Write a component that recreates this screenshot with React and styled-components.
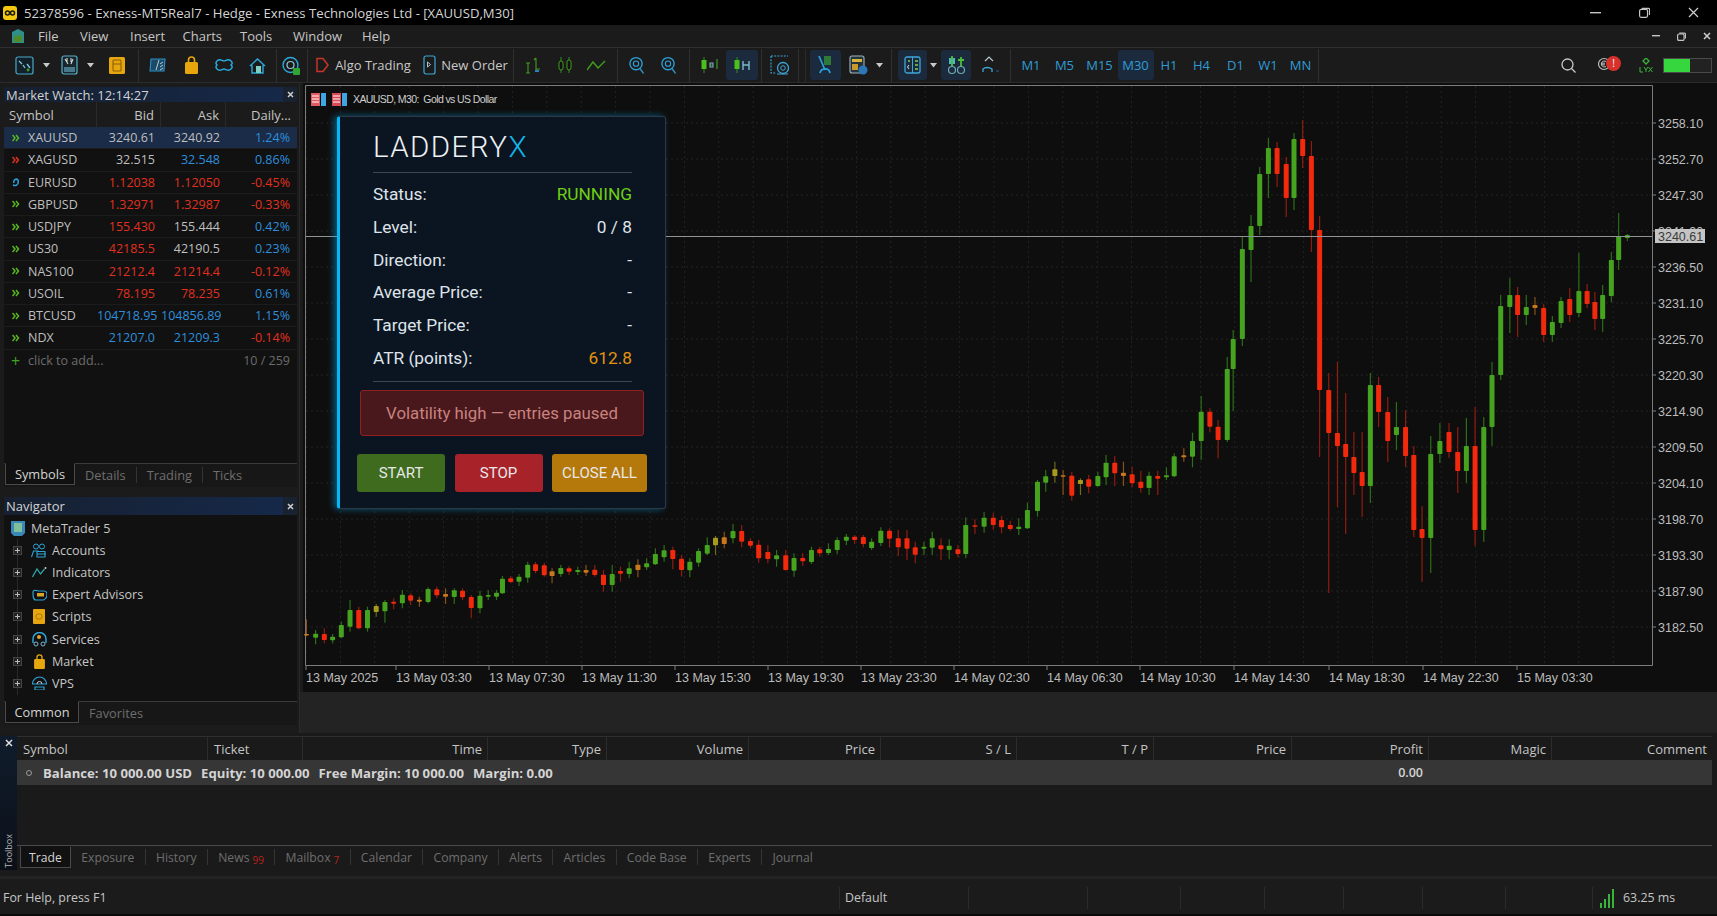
import React from "react"
import styled, { createGlobalStyle } from "styled-components"

const GlobalStyle = createGlobalStyle`
	html, body { margin: 0; padding: 0; background: #000; }
	* { box-sizing: border-box; }
`

const Screen = styled.div`
	width: 1717px;
	height: 916px;
	display: flex;
	flex-direction: column;
	overflow: hidden;
	background: #1b1b1b;
	font-family: "Open Sans", "Liberation Sans", sans-serif;
	font-size: 12.5px;
	color: #c8c8c8;
`

/* title bar + menu */
const TitleBar = styled.div`
	height: 25px;
	flex: none;
	background: #000;
	display: flex;
	align-items: center;
	padding-left: 3px;
	color: #d4d4d4;
	font-size: 13.15px;
`
const TitleText = styled.span`
	margin-left: 7px;
	white-space: nowrap;
`
const WindowButtons = styled.div`
	margin-left: auto;
	display: flex;
	align-items: center;
	gap: ${(p) => p.$gap}px;
	padding-right: ${(p) => p.$right}px;
`
const MenuBar = styled.div`
	height: 23px;
	flex: none;
	display: flex;
	align-items: center;
	padding-left: 11px;
	background: #1b1b1b;
	border-bottom: 1px solid #303030;
	font-size: 13px;
	color: #c6c6c6;
`
const MenuItem = styled.span`
	width: ${(p) => p.$w}px;
	margin-left: ${(p) => p.$ml || 0}px;
`

/* toolbar */
const Toolbar = styled.div`
	height: 35px;
	flex: none;
	display: flex;
	align-items: center;
	background: #1b1b1b;
	border-bottom: 1px solid #2c2c2c;
	font-size: 13px;
	color: #c8c8c8;
`
const Tool = styled.div`
	width: ${(p) => p.$w}px;
	margin-left: ${(p) => p.$ml || 0}px;
	flex: none;
	height: 30px;
	display: flex;
	align-items: center;
	justify-content: center;
	border-radius: 3px;
	background: ${(p) => (p.$on ? "#1b2b3d" : "transparent")};
	white-space: nowrap;
`
const ToolSep = styled.div`
	width: 1px;
	height: 33px;
	flex: none;
	margin-left: ${(p) => p.$ml}px;
	background: ${(p) => (p.$dotted ? "#2a2a2a" : "#303030")};
`
const Timeframe = styled(Tool)`
	color: #2f9bd6;
	font-size: 13px;
`
const ToolbarEnd = styled.div`
	margin-left: auto;
	display: flex;
	align-items: center;
	padding-right: 5px;
`
const AlertDot = styled.div`
	position: absolute;
	left: 9px;
	top: 0;
	width: 15px;
	height: 15px;
	border-radius: 50%;
	background: #d8302a;
	color: #fff;
	font-size: 10px;
	line-height: 15px;
	text-align: center;
`
const CoinWrap = styled.div`
	position: relative;
	width: 24px;
	height: 15px;
	margin-left: 21px;
	margin-top: -3px;
`
const Meter = styled.div`
	width: 49px;
	height: 15px;
	margin-left: 10px;
	border: 1px solid #4a4a4a;
	background: #222;
`
const MeterFill = styled.div`
	height: 100%;
	background: #36d63f;
`

/* workspace */
const Workspace = styled.div`
	height: 650px;
	flex: none;
	display: flex;
`
const LeftDock = styled.div`
	width: 300px;
	flex: none;
	display: flex;
	flex-direction: column;
	padding: 4px 2px 6px 4px;
	border-right: 1px solid #2a2a2a;
`
const DockPanel = styled.div`
	background: #111;
	display: flex;
	flex-direction: column;
	height: ${(p) => p.$h}px;
	margin-top: ${(p) => p.$mt || 0}px;
`
const DockTitle = styled.div`
	height: ${(p) => p.$h}px;
	flex: none;
	display: flex;
	align-items: center;
	justify-content: space-between;
	padding: 0 0 0 2px;
	background: linear-gradient(90deg, #162030, #16294a);
	color: #d2d2d2;
	font-size: 13px;
`
const DockClose = styled.span`
	width: 14px;
	height: 100%;
	display: flex;
	align-items: center;
	justify-content: center;
	background: #192230;
`
const QuotesHead = styled.div`
	height: 25px;
	flex: none;
	display: grid;
	grid-template-columns: 93px 64px 65px 1fr;
	background: #1b1b1b;
	color: #c4c4c4;
	font-size: 13px;
`
const HeadCell = styled.div`
	display: flex;
	align-items: center;
	justify-content: ${(p) => (p.$left ? "flex-start" : "flex-end")};
	padding: ${(p) => (p.$left ? "0 0 0 5px" : "0 6px 0 0")};
	border-right: 1px solid #2a2a2a;
	&:last-child { border-right: none; }
`
const QuoteRow = styled.div`
	height: 22.25px;
	flex: none;
	display: grid;
	grid-template-columns: 93px 64px 65px 1fr;
	align-items: center;
	background: ${(p) => (p.$active ? "#1a2c47" : "transparent")};
	border-bottom: 1px solid #1c1c1c;
	font-size: 12.5px;
`
const SymbolCell = styled.div`
	display: flex;
	align-items: center;
	gap: 8px;
	padding-left: 8px;
	color: #bfbfbf;
`
const QuoteCell = styled.div`
	text-align: right;
	padding-right: ${(p) => p.$pad}px;
	white-space: nowrap;
	color: ${(p) => ({ red: "#e2301f", blue: "#2e8fdc", gray: "#bfbfbf" })[p.$tone]};
`
const AddRow = styled.div`
	display: flex;
	align-items: center;
	height: 22px;
	padding: 0 7px 0 7px;
	color: #6c6c6c;
`
const AddPlus = styled.span`
	color: #3fa423;
	font-size: 16px;
	line-height: 16px;
	width: 17px;
`
const AddCount = styled.span`
	margin-left: auto;
`
const TabStrip = styled.div`
	height: ${(p) => p.$h}px;
	flex: none;
	display: flex;
	align-items: flex-start;
	border-top: 1px solid #3a3a3a;
	background: #171717;
	color: #6e6e6e;
	font-size: 12.8px;
`
const ActiveTab = styled.div`
	height: calc(100% - 1px);
	width: ${(p) => p.$w}px;
	margin-left: 1px;
	flex: none;
	margin-top: -1px;
	display: flex;
	align-items: center;
	justify-content: center;
	background: #111;
	color: #d4d4d4;
	border: 1px solid #4a4a4a;
	border-top: 1px solid #111;
`
const Tab = styled.div`
	height: 70%;
	margin-top: 3px;
	padding: 0 10px;
	display: flex;
	align-items: center;
	white-space: nowrap;
	border-right: 1px solid ${(p) => (p.$last ? "transparent" : "#343434")};
`
const TabBadge = styled.sup`
	color: #b8241c;
	font-size: 10px;
	vertical-align: baseline;
	margin: 6px 0 0 3px;
`
const Spacer = styled.div`
	flex: 1;
`
const TreeList = styled.div`
	padding-top: 2px;
`
const TreeRow = styled.div`
	height: 22.2px;
	flex: none;
	position: relative;
	display: flex;
	align-items: center;
	padding-left: ${(p) => (p.$root ? 6 : 9)}px;
	color: #c6c6c6;
	font-size: 12.6px;
	&::before {
		content: ${(p) => (p.$root ? "none" : '""')};
		position: absolute;
		left: 13px;
		top: 0;
		bottom: 0;
		width: 1px;
		background: #2a2a2a;
	}
`
const TreeToggle = styled.span`
	width: 9px;
	height: 9px;
	flex: none;
	margin-right: 9px;
	position: relative;
	border: 1px solid #444;
	background: #222;
	&::before {
		content: "";
		position: absolute;
		left: 1px;
		right: 1px;
		top: 3px;
		height: 1px;
		background: #bbb;
	}
	&::after {
		content: "";
		position: absolute;
		top: 1px;
		bottom: 1px;
		left: 3px;
		width: 1px;
		background: #bbb;
	}
`
const TreeIcon = styled.span`
	width: 16px;
	height: 16px;
	flex: none;
	margin-right: 5px;
	display: flex;
	align-items: center;
	justify-content: center;
`

/* chart */
const ChartColumn = styled.div`
	flex: 1;
	display: flex;
	flex-direction: column;
	padding-left: 3px;
	min-width: 0;
`
const ChartFrame = styled.div`
	position: relative;
	height: 609px;
	flex: none;
	background: #0e0e0e;
`
const ChartBand = styled.div`
	flex: 1;
	background: #232323;
	margin-left: -3px;
`
const ChartCaption = styled.div`
	position: absolute;
	left: 8px;
	top: 8px;
	display: flex;
	align-items: center;
	height: 16px;
	font-family: "Liberation Sans", sans-serif;
	font-size: 10.5px;
	letter-spacing: -0.6px;
	color: #cfcfcf;
	white-space: pre;
`
const FlagSlot = styled.span`
	margin-left: 6px;
`
const CaptionText = styled.span`
	margin-left: 6px;
`

/* ladderyx panel */
const RobotPanel = styled.div`
	position: absolute;
	left: 34px;
	top: 33px;
	width: 329px;
	height: 393px;
	padding: 12px 33px 0 33px;
	border: 1px solid #2e3947;
	border-left: 3px solid #05b7f5;
	border-radius: 3px;
	background: #0b1522;
	box-shadow: -3px 0 7px rgba(5, 170, 240, 0.5);
	font-family: Roboto, "Liberation Sans", sans-serif;
	color: #dfe4ea;
`
const RobotTitle = styled.div`
	height: 36px;
	line-height: 36px;
	font-size: 29.5px;
	font-weight: 300;
	letter-spacing: 1.4px;
	color: #eef1f4;
`
const RobotAccent = styled.span`
	color: #12b6ea;
`
const RobotRule = styled.div`
	height: 1px;
	background: #3c4652;
	margin-top: ${(p) => p.$mt}px;
`
const RobotRows = styled.div`
	margin-top: 5px;
`
const RobotRow = styled.div`
	height: 32.7px;
	display: flex;
	align-items: center;
	justify-content: space-between;
	font-size: 17.3px;
`
const RobotValue = styled.span`
	color: ${(p) => p.$color || "#dfe4ea"};
`
const RobotAlert = styled.div`
	height: 46px;
	margin: 8px -12px 0 -13px;
	display: flex;
	align-items: center;
	justify-content: center;
	border: 1px solid #8f2020;
	border-radius: 3px;
	background: #48181c;
	color: #c9827e;
	font-size: 16.8px;
`
const RobotActions = styled.div`
	display: flex;
	gap: 9.5px;
	margin: 18px -15px 0 -16px;
`
const RobotButton = styled.button`
	width: ${(p) => p.$w}px;
	height: 38px;
	padding: 0;
	border: none;
	border-radius: 3px;
	background: ${(p) => p.$bg};
	color: #e8e8e8;
	font-family: inherit;
	font-size: 15px;
`

/* toolbox */
const Toolbox = styled.div`
	height: 143px;
	flex: none;
	display: flex;
	padding-top: 3px;
	background: #1a1a1a;
`
const ToolboxRail = styled.div`
	width: 17px;
	flex: none;
	display: flex;
	flex-direction: column;
	align-items: center;
	justify-content: space-between;
	margin-bottom: 6px;
	padding: 3px 0 2px;
	background: linear-gradient(180deg, #101c2c, #0b1018);
`
const RailLabel = styled.span`
	writing-mode: vertical-rl;
	transform: rotate(180deg);
	font-size: 9px;
	line-height: 12px;
	color: #b8b8b8;
`
const ToolboxBody = styled.div`
	flex: 1;
	min-width: 0;
	display: flex;
	flex-direction: column;
	padding-right: 5px;
`
const TradeHead = styled.div`
	height: 24px;
	flex: none;
	display: flex;
	border-top: 1px solid #2e2e2e;
	color: #c4c4c4;
	font-size: 13px;
`
const TradeColumn = styled.div`
	width: ${(p) => p.$w}px;
	flex: none;
	display: flex;
	align-items: center;
	justify-content: ${(p) => (p.$left ? "flex-start" : "flex-end")};
	padding: 0 5px 0 6px;
	border-right: 1px solid #2c2c2c;
	&:last-child { border-right: none; }
`
const BalanceRow = styled.div`
	height: 25px;
	flex: none;
	display: flex;
	align-items: center;
	padding-left: 9px;
	background: #363636;
	color: #d4d4d4;
	font-weight: 700;
	font-size: 13.15px;
`
const BalanceMark = styled.span`
	width: 6px;
	height: 6px;
	margin-right: 11px;
	border: 1px solid #9a9a9a;
	border-radius: 50%;
`
const BalanceText = styled.span`
	white-space: nowrap;
	margin-right: ${(p) => p.$mr}px;
`
const BalanceProfit = styled.span`
	margin-left: auto;
	margin-right: 289px;
	font-weight: 600;
	font-size: 12.5px;
`
const TradeEmpty = styled.div`
	height: 61px;
	flex: none;
	background: #1a1a1a;
	border-bottom: 1px solid #4a4a4a;
`
const ToolboxTabs = styled.div`
	height: 24px;
	flex: none;
	display: flex;
	align-items: flex-start;
	padding-left: 2px;
	color: #6e6e6e;
	font-size: 12.2px;
`
const ToolboxActive = styled(ActiveTab)`
	height: 22px;
	margin-top: 0;
`
const ToolboxTab = styled(Tab)`
	height: 16px;
	margin-top: 3px;
	padding: 0 10.3px;
`
const StatusBar = styled.div`
	height: 40px;
	flex: none;
	display: flex;
	align-items: center;
	padding-top: 2px;
	border-top: 3px solid #232323;
	border-bottom: 2px solid #0a0a0a;
	background: #1b1b1b;
	color: #c6c6c6;
	font-size: 12.4px;
`
const StatusCell = styled.div`
	width: ${(p) => p.$w}px;
	height: 22px;
	flex: none;
	display: flex;
	align-items: center;
	gap: 8px;
	padding-left: ${(p) => p.$pad || 0}px;
	border-right: 1px solid #2b2b2b;
	&:last-child { border-right: none; }
`

/* icons */
const Svg = ({ w, h, children }) => (
	<svg width={w} height={h} viewBox={`0 0 ${w} ${h}`} fill="none" style={{ display: "block" }}>
		{children}
	</svg>
)
const Caret = () => (
	<Svg w={7} h={5}>
		<path d="M0 0h7L3.5 4.5z" fill="#c8c8c8" />
	</Svg>
)
const CloseX = ({ size = 8, color = "#cfcfcf", stroke = 1.5 }) => (
	<Svg w={size} h={size}>
		<path d={`M1 1L${size - 1} ${size - 1}M${size - 1} 1L1 ${size - 1}`} stroke={color} strokeWidth={stroke} />
	</Svg>
)
const MinimizeGlyph = ({ w }) => (
	<Svg w={w} h={2}>
		<rect width={w} height={1.4} fill="#c4c4c4" />
	</Svg>
)
const RestoreGlyph = ({ s }) => (
	<Svg w={s} h={s}>
		<rect x="0.6" y={s * 0.22} width={s * 0.72} height={s * 0.72} rx="1.5" stroke="#c4c4c4" strokeWidth="1.2" />
		<path d={`M${s * 0.25} ${s * 0.12}H${s - 1.5}a1 1 0 0 1 1 1V${s * 0.72}`} stroke="#c4c4c4" strokeWidth="1.2" />
	</Svg>
)
const ExnessLogo = () => (
	<Svg w={14} h={14}>
		<rect width="14" height="14" rx="3" fill="#f3c80e" />
		<circle cx="4.5" cy="7" r="2" stroke="#1a1a1a" strokeWidth="1.5" />
		<circle cx="9.5" cy="7" r="2" stroke="#1a1a1a" strokeWidth="1.5" />
	</Svg>
)
const TerminalLogo = () => (
	<Svg w={14} h={15}>
		<path d="M1 3l6-3 6 3v11H1z" fill="#2f8f8a" />
		<path d="M3 13V8l2-2 2 2 2-3 2 3v5z" fill="#4f8a2c" />
	</Svg>
)
const ChartNewIcon = () => (
	<Svg w={19} h={19}>
		<rect x="1" y="1" width="17" height="17" rx="2" stroke="#4aa7c9" strokeWidth="1.2" fill="#122029" />
		<path d="M4 5l3 3M8 9l2 3M12 8l3 4" stroke="#7fc6dd" strokeWidth="1.3" />
		<circle cx="13" cy="14" r="1.4" fill="#3f9d1e" />
	</Svg>
)
const ProfileIcon = () => (
	<Svg w={17} h={20}>
		<rect x="1" y="1" width="15" height="18" rx="2" stroke="#58b0c8" strokeWidth="1.2" fill="#18272d" />
		<path d="M4 4l3 5M12 4l-2 5M6 3v4M10 3v4" stroke="#d8d8d8" strokeWidth="1.1" />
		<rect x="3" y="12" width="11" height="5" fill="#49788a" />
	</Svg>
)
const SheetIcon = () => (
	<Svg w={16} h={17}>
		<rect width="16" height="17" rx="1.5" fill="#e8a60e" />
		<rect x="4" y="3" width="8" height="11" rx="1" stroke="#8a6008" strokeWidth="1.1" />
		<path d="M4 7h8" stroke="#8a6008" />
	</Svg>
)
const WalletIcon = () => (
	<Svg w={17} h={14}>
		<path d="M2 1h14l-1 12H1z" fill="#1c4a66" stroke="#2f8fc4" strokeWidth="1.1" />
		<path d="M7 12L10 2M11 6l3-2M11 9l3-2M11 12l3-2" stroke="#b4ced9" strokeWidth="1" />
	</Svg>
)
const LockIcon = ({ w = 13, h = 18 }) => (
	<svg width={w} height={h} viewBox="0 0 13 18" fill="none" style={{ display: "block" }}>
		<path d="M3.5 6V4a3 3 0 0 1 6 0v2" stroke="#e8a60e" strokeWidth="1.6" />
		<rect y="6" width="13" height="12" rx="1.5" fill="#e8a60e" />
	</svg>
)
const SignalsIcon = () => (
	<Svg w={18} h={14}>
		<path d="M2 3c3-3 5 0 7 0s4-3 7 0c2 2 1 3 0 4 1 1 2 2 0 4-3 3-5 0-7 0s-4 3-7 0c-2-2-1-3 0-4-1-1-2-2 0-4z" stroke="#29a9dc" strokeWidth="1.5" />
	</Svg>
)
const HostingIcon = () => (
	<Svg w={17} h={17}>
		<path d="M1 9l7.5-7L16 9M3 8v8h11V8" stroke="#29a9dc" strokeWidth="1.4" />
		<rect x="7" y="9" width="5" height="7" fill="#7fd0c4" />
	</Svg>
)
const MqlIcon = () => (
	<Svg w={18} h={19}>
		<circle cx="8.5" cy="9" r="7.5" stroke="#29a9dc" strokeWidth="1.4" />
		<circle cx="8.5" cy="9" r="3.5" stroke="#8fc7dc" strokeWidth="1.2" />
		<rect x="11" y="12" width="7" height="7" rx="1" fill="#2fa532" />
	</Svg>
)
const AlgoIcon = () => (
	<Svg w={13} h={16}>
		<path d="M1 1.5h6l5 6.5-5 6.5H1z" stroke="#c8352a" strokeWidth="1.5" />
	</Svg>
)
const OrderIcon = () => (
	<Svg w={13} h={20}>
		<rect x="1" y="1" width="11" height="18" rx="2" stroke="#3ea6d8" strokeWidth="1.2" />
		<path d="M4.5 7l3 2.5-3 2.5z" stroke="#a5c7d8" />
	</Svg>
)
const BarsChartIcon = () => (
	<Svg w={15} h={18}>
		<path d="M2 7v10M0 17h4M0 7h4" stroke="#3f9d1e" strokeWidth="1.1" />
		<path d="M10 2v12M8 4l2-2M10 13h4" stroke="#3f9d1e" strokeWidth="1.1" />
		<path d="M9 15h4" stroke="#2f7fc4" strokeWidth="2" />
	</Svg>
)
const CandlesIcon = () => (
	<Svg w={16} h={18}>
		<path d="M4 1v16M12 1v16" stroke="#2f8f22" strokeWidth="1" />
		<rect x="2" y="5" width="4" height="9" rx="2" stroke="#3f9d1e" fill="#111" />
		<rect x="10" y="4" width="4" height="10" rx="2" stroke="#3f9d1e" fill="#111" />
	</Svg>
)
const LineIcon = () => (
	<Svg w={21} h={14}>
		<path d="M0 12l6-8 5 6 7-7" stroke="#3f9d1e" strokeWidth="1.4" />
	</Svg>
)
const ZoomIcon = () => (
	<Svg w={16} h={19}>
		<circle cx="7.5" cy="7.5" r="6.5" stroke="#2ea0d8" strokeWidth="1.4" />
		<circle cx="7.5" cy="7.5" r="2.8" stroke="#2ea0d8" strokeWidth="1.2" />
		<path d="M12 13l3.5 5" stroke="#2ea0d8" strokeWidth="1.4" />
	</Svg>
)
const GreenBarsIcon = ({ hi }) => (
	<Svg w={18} h={18}>
		<path d="M4 1v16" stroke="#2e8f1f" />
		<rect x="1.5" y="4" width="5" height="9" fill="#4cbf1f" />
		{hi ? (
			<path d="M10 5v9M16 5v9M10 9h6" stroke="#7fb8cc" strokeWidth="1.4" />
		) : (
			<>
				<path d="M10 9h3M17 3v10" stroke="#3f9d1e" strokeWidth="1.2" />
				<rect x="10" y="7" width="3" height="4" stroke="#7fb8cc" />
			</>
		)}
	</Svg>
)
const AutoscaleIcon = () => (
	<Svg w={19} h={20}>
		<path d="M1 1h17M1 1v17h5" stroke="#3ea6d8" strokeWidth="1.1" strokeDasharray="2 1.2" />
		<circle cx="13" cy="13" r="5.5" stroke="#3ea6d8" strokeWidth="1.3" />
		<circle cx="13" cy="13" r="2.3" stroke="#3ea6d8" />
		<path d="M7 19h11" stroke="#3ea6d8" />
	</Svg>
)
const CursorIcon = () => (
	<Svg w={16} h={20}>
		<rect x="7" y="1" width="7" height="9" fill="#2f7a3a" />
		<path d="M2 1l6 14M3 18c1-5 9-6 10 0" stroke="#29a0d8" strokeWidth="1.7" />
	</Svg>
)
const CalcIcon = () => (
	<Svg w={19} h={20}>
		<rect x="1" y="1" width="14" height="17" rx="2" stroke="#9fb3bb" strokeWidth="1.1" fill="#24343a" />
		<rect x="3" y="4" width="10" height="3" fill="#d8b23a" />
		<rect x="3" y="9" width="6" height="6" fill="#c99a2a" />
		<circle cx="14" cy="15" r="4.5" fill="#2a78b8" />
	</Svg>
)
const GridIcon = () => (
	<Svg w={17} h={18}>
		<rect x="1" y="1" width="15" height="16" rx="2" stroke="#3ea6d8" strokeWidth="1.3" />
		<path d="M8.5 1v16" stroke="#3ea6d8" />
		<path d="M4 5h2M11 5h3M11 9h3M11 13h3" stroke="#7fd04a" strokeWidth="1.3" />
		<path d="M5 9L3.5 11 5 13" stroke="#cfe3ea" />
	</Svg>
)
const GearIcon = () => (
	<Svg w={20} h={20}>
		<rect x="3" y="3" width="6" height="6" fill="#4cb8c4" />
		<path d="M6 1v10M15 2v10M12 5h6" stroke="#4cbf3a" strokeWidth="1.8" />
		<circle cx="6" cy="15" r="3.5" stroke="#6fa8b4" strokeWidth="1.2" />
		<circle cx="15" cy="15" r="3.5" stroke="#6fa8b4" strokeWidth="1.2" />
	</Svg>
)
const ArrowsIcon = () => (
	<Svg w={19} h={18}>
		<path d="M4 5l4-4 4 4" stroke="#b5c9cf" strokeWidth="1.2" />
		<path d="M2 16v-3c2-2 6-2 9 0v3" stroke="#3ea6d8" strokeWidth="1.3" />
		<path d="M15 15h3" stroke="#244f66" strokeWidth="1.4" />
	</Svg>
)
const SearchIcon = () => (
	<Svg w={15} h={15}>
		<circle cx="6.5" cy="6.5" r="5.5" stroke="#c8c8c8" strokeWidth="1.3" />
		<path d="M10.5 10.5l4 4" stroke="#c8c8c8" strokeWidth="1.3" />
	</Svg>
)
const CoinIcon = () => (
	<Svg w={13} h={15}>
		<circle cx="7" cy="8" r="5.5" stroke="#bdbdbd" strokeWidth="1.2" />
		<path d="M9 5.5a3 3 0 1 0 0 5M4 7.2h4M4 8.8h4" stroke="#bdbdbd" />
	</Svg>
)
const LyxIcon = () => (
	<Svg w={14} h={15}>
		<path d="M7 0l3 3-3 3-3-3z" stroke="#38b43a" strokeWidth="1.3" />
		<path d="M1 9v5h3M5 9l2 3 2-3M7 12v2M9.5 9l4 5M13.5 9l-4 5" stroke="#38b43a" strokeWidth="1" />
	</Svg>
)
const ChevronMark = ({ color }) => (
	<Svg w={8} h={8}>
		<path d="M0.5 1l2.5 3-2.5 3M4 1l2.5 3L4 7" stroke={color} strokeWidth="1.5" />
	</Svg>
)
const SpreadMark = () => (
	<Svg w={8} h={9}>
		<path d="M1 7c4 2 6-2 5-5-2-2-5 0-4 3" stroke="#2ba3db" strokeWidth="1.5" />
	</Svg>
)
const AccountsIcon = () => (
	<Svg w={16} h={15}>
		<circle cx="5" cy="3.5" r="2.5" stroke="#2fa3d6" />
		<circle cx="11" cy="3.5" r="2.5" stroke="#2fa3d6" />
		<path d="M0.5 14l2-6h5M6 14V8.5h8V14zM6 11h9" stroke="#2fa3d6" strokeWidth="1.1" />
	</Svg>
)
const IndicatorsIcon = () => (
	<Svg w={15} h={12}>
		<path d="M0.5 11L5 3l3.5 5 4-5" stroke="#2da4a8" strokeWidth="1.3" />
		<circle cx="13.5" cy="2" r="1" fill="#cfcfcf" />
	</Svg>
)
const AdvisorsIcon = () => (
	<Svg w={15} h={12}>
		<path d="M1 3c0-3 5-1 6-1h5c2 0 3 2 3 4s-2 5-4 5H4C1 11 1 7 1 3z" stroke="#2fa3d6" strokeWidth="1.2" />
		<rect x="5" y="4" width="7" height="3.5" fill="#d8a52a" />
	</Svg>
)
const ScriptsIcon = () => (
	<Svg w={12} h={15}>
		<rect width="12" height="15" rx="1" fill="#e8a60e" />
		<rect x="3" y="5" width="6" height="5" rx="2" stroke="#a8760a" />
	</Svg>
)
const ServicesIcon = () => (
	<Svg w={15} h={15}>
		<path d="M1 11V7a6.5 6.5 0 0 1 13 0v4" stroke="#2fa3d6" strokeWidth="1.5" />
		<circle cx="7" cy="5" r="2" fill="#e0a42a" />
		<circle cx="4" cy="12" r="2" stroke="#7fb7cf" />
		<circle cx="11" cy="12" r="2" stroke="#7fb7cf" />
	</Svg>
)
const VpsIcon = () => (
	<Svg w={15} h={14}>
		<path d="M0.5 8a7 7 0 0 1 14 0zM3 11h9v3H3z" stroke="#2fa3d6" strokeWidth="1.2" />
		<path d="M5 8a2.5 2.5 0 0 1 5 0" stroke="#cfcfcf" />
	</Svg>
)
const RootIcon = () => (
	<Svg w={14} h={15}>
		<path d="M0 0h14v12l-3 3H3l-3-3z" fill="#3a88b8" />
		<rect x="3" y="2" width="8" height="9" fill="#7fbf9a" />
	</Svg>
)
const SignalBars = () => (
	<Svg w={15} h={20}>
		<rect x="0" y="15" width="2" height="5" fill="#38b43a" />
		<rect x="4" y="11" width="2" height="9" fill="#38b43a" />
		<rect x="8" y="6" width="2" height="14" fill="#38b43a" />
		<rect x="12" y="1" width="2" height="19" fill="#38b43a" />
	</Svg>
)
const FlagIcon = ({ tint }) => (
	<Svg w={15} h={13}>
		<rect width="9" height="13" fill={tint} />
		<path d="M1 3h7M1 6h7M1 9h7" stroke="#fff" strokeWidth="1" />
		<rect x="10" y="0" width="5" height="13" fill="#3ea6e0" />
	</Svg>
)

/* chart data: samples as [x, bodyTop, bodyBottom, high, low, color] */
const sessionA = [
	[14,612,615,568,618,"o"],[34,611,623,600,643,"g"],[53,612,630,595,640,"r"],[71,620,631,612,640,"g"],[90,585,622,575,625,"g"],
	[109,540,590,510,605,"g"],[128,540,595,530,598,"r"],[147,540,595,530,605,"g"],[166,528,546,522,560,"y"],[185,516,544,510,578,"g"],
	[204,515,521,505,538,"r"],[223,494,520,480,535,"g"],[241,496,512,490,525,"r"],[260,509,515,500,530,"o"],[279,477,516,472,520,"g"],
	[298,478,496,470,505,"r"],[317,492,500,475,522,"o"],[336,481,501,475,522,"g"],[354,482,502,475,510,"r"],[373,501,534,495,565,"r"],
	[392,497,535,482,550,"g"],[410,495,500,480,510,"g"],[428,488,500,480,510,"g"],[441,446,490,438,492,"g"],[459,445,456,438,460,"r"],
	[477,440,455,432,468,"g"],[496,404,443,395,458,"g"],[513,403,423,396,430,"r"],[532,406,436,398,440,"r"],[549,424,438,415,460,"o"],
	[568,414,432,405,440,"g"],[586,415,425,408,435,"r"],[605,420,426,410,435,"g"],[623,420,428,405,438,"o"],[642,419,435,405,440,"r"],
	[661,434,465,420,485,"r"],[680,432,465,405,485,"g"],[698,423,431,410,455,"r"],[717,415,432,395,445,"g"],[736,404,420,388,442,"o"],
	[755,400,412,385,420,"g"],[774,372,403,355,405,"g"],[793,361,382,345,395,"g"],[812,360,387,350,418,"r"],[831,386,420,375,440,"r"],
	[849,395,421,385,442,"g"],[868,363,398,355,410,"g"],[887,345,371,322,375,"g"],[905,323,346,318,375,"y"],[924,322,342,305,355,"o"],
	[943,303,325,282,340,"g"],[962,303,335,285,352,"r"],[981,333,347,325,355,"r"],[999,344,385,330,398,"r"],[1019,366,387,345,400,"r"],
	[1038,376,388,360,410,"g"],[1058,376,420,360,422,"r"],[1076,384,422,370,440,"g"],[1095,384,394,370,408,"r"],[1114,360,396,350,402,"g"],
	[1132,358,370,350,380,"r"],[1151,357,369,340,375,"g"],[1170,330,360,322,372,"g"],[1190,320,332,312,345,"g"],[1208,320,330,315,342,"r"],
	[1227,321,342,315,352,"r"],[1245,335,354,325,360,"g"],[1265,302,339,292,348,"g"],[1284,302,326,295,352,"r"],[1303,325,352,300,378,"r"],
	[1322,325,356,300,390,"r"],[1340,352,374,335,400,"r"],[1359,350,356,335,375,"g"],[1377,325,353,305,375,"g"],[1396,346,358,325,390,"r"],
	[1414,347,360,328,388,"g"],[1433,358,372,345,382,"r"],[1450,285,372,262,385,"g"],[1470,286,290,268,312,"r"],[1490,263,290,246,308,"g"],
	[1510,263,285,248,300,"r"],[1528,270,292,258,310,"r"],[1547,285,297,272,302,"r"],
].map(([x, t, b, h, l, c]) => [300 + x / 2.178, 430 + t / 3, 430 + b / 3, 430 + h / 3, 430 + l / 3, c])

const sessionB = [
	[41,440,447,415,465,"g"],[60,390,445,368,447,"g"],[82,305,393,300,410,"g"],[100,289,308,270,335,"g"],[120,268,288,245,308,"y"],
	[138,286,289,270,345,"o"],[157,287,347,275,362,"r"],[176,300,312,295,345,"y"],[194,298,320,285,340,"r"],[214,288,318,275,320,"g"],
	[232,248,292,225,315,"g"],[251,248,280,228,318,"r"],[270,278,288,245,318,"o"],[289,283,310,260,322,"r"],[308,305,324,272,338,"r"],
	[326,287,324,275,345,"g"],[345,288,296,272,345,"r"],[364,286,292,262,300,"g"],[381,229,289,220,292,"g"],[402,226,232,205,245,"o"],
	[421,183,230,158,262,"g"],[440,95,183,48,240,"g"],[459,95,140,85,157,"r"],[477,140,180,120,235,"r"],
].map(([x, t, b, h, l, c]) => [1000 + x / 2.187, 380 + t / 3, 380 + b / 3, 380 + h / 3, 380 + l / 3, c])

const sessionC = [
	[497,369,440,357,442,"g"],[510,339,369,330,411,"g"],[530,249,339,237,346,"g"],[549,226,250,215,282,"g"],[568,174,226,167,235,"g"],
	[587,148,174,138,198,"g"],[606,148,174,142,187,"r"],[626,164,198,157,217,"r"],[643,139,198,133,210,"g"],[662,139,156,120,168,"r"],
	[681,156,230,141,252,"r"],[699,230,390,216,457,"r"],[719,390,433,373,593,"r"],[738,433,446,362,507,"r"],[756,444,457,393,534,"r"],
	[774,457,473,432,495,"r"],[792,472,486,432,517,"r"],[810,385,486,373,503,"g"],[828,385,412,377,427,"r"],[848,412,441,397,462,"r"],
	[867,427,435,402,450,"g"],[887,427,456,410,467,"r"],[905,455,530,446,537,"r"],[923,529,538,506,582,"r"],[942,454,538,436,573,"g"],
	[962,441,454,423,463,"g"],[982,432,452,423,458,"r"],[1001,452,471,427,493,"r"],[1020,446,471,418,483,"g"],[1039,446,530,407,546,"r"],
	[1058,427,530,417,542,"g"],[1076,375,427,362,446,"g"],[1095,306,375,295,380,"g"],[1115,295,307,278,333,"g"],[1132,295,315,287,337,"r"],
	[1151,307,315,295,325,"g"],[1170,305,308,297,315,"o"],[1189,308,335,304,342,"r"],[1208,322,335,316,342,"g"],[1227,301,323,297,328,"g"],
	[1246,299,315,288,322,"r"],[1266,291,313,253,317,"g"],[1284,291,304,284,308,"r"],[1301,302,319,292,330,"r"],[1318,295,319,285,332,"g"],
	[1337,260,296,252,302,"g"],[1353,236,260,213,270,"g"],[1372,235,238,234,241,"g"],
].map(([x, t, b, h, l, c]) => [1000 + x / 2.187, t, b, h, l, c])

const candles = [...sessionA, ...sessionB, ...sessionC]
const bodyColors = { g: "#45a31f", r: "#f2290c", o: "#c9761c", y: "#a69a1e" }
const wickColors = { g: "#2d6e17", r: "#8f1d10", o: "#86511a", y: "#6f6a1a" }

const priceLabels = [
	["3258.10", 123], ["3252.70", 159], ["3247.30", 195], ["3241.90", 231], ["3236.50", 267], ["3231.10", 303], ["3225.70", 339],
	["3220.30", 375], ["3214.90", 411], ["3209.50", 447], ["3204.10", 483], ["3198.70", 519], ["3193.30", 555], ["3187.90", 591], ["3182.50", 627],
]
const timeLabels = [
	["13 May 2025", 306], ["13 May 03:30", 396], ["13 May 07:30", 489], ["13 May 11:30", 582], ["13 May 15:30", 675], ["13 May 19:30", 768], ["13 May 23:30", 861],
	["14 May 02:30", 954], ["14 May 06:30", 1047], ["14 May 10:30", 1140], ["14 May 14:30", 1234], ["14 May 18:30", 1329], ["14 May 22:30", 1423], ["15 May 03:30", 1517],
]
const gridColumns = Array.from({ length: 39 }, (_, i) => 306 + i * 34.4)

function PriceChart() {
	return (
		<svg width="1414" height="609" viewBox="303 83 1414 609" style={{ display: "block" }} fontFamily="Liberation Sans, sans-serif" fontSize="12.5">
			<g stroke="#232323" strokeDasharray="2 3">
				{gridColumns.map((x) => (
					<line key={x} x1={x} x2={x} y1={86} y2={665} />
				))}
				{priceLabels.map(([p, y]) => (
					<line key={p} x1={306} x2={1652} y1={y} y2={y} />
				))}
			</g>
			<path d="M305.5 85.5H1652.5V665.5H305.5Z" stroke="#7c7c7c" fill="none" />
			{candles.map(([x, top, bottom, high, low, c], i) => (
				<g key={i}>
					<line x1={x} x2={x} y1={high} y2={low} stroke={wickColors[c]} strokeWidth="1.2" />
					<rect x={x - 2.5} y={top} width="5" height={Math.max(bottom - top, 1.5)} rx="0.8" fill={bodyColors[c]} />
				</g>
			))}
			<line x1={306} x2={1652} y1={236.5} y2={236.5} stroke="#8f9396" />
			{priceLabels.map(([p, y]) => (
				<g key={p}>
					<line x1={1652} x2={1656} y1={y} y2={y} stroke="#7c7c7c" />
					<text x={1658} y={y + 4.5} fill="#bdbdbd">{p}</text>
				</g>
			))}
			<rect x={1655} y={229} width={50} height={14} fill="#c4c4c4" />
			<text x={1658} y={241} fill="#3a3a3a">3240.61</text>
			{timeLabels.map(([t, x]) => (
				<g key={t}>
					<line x1={x} x2={x} y1={666} y2={670} stroke="#7c7c7c" />
					<text x={x} y={682} fill="#bdbdbd">{t}</text>
				</g>
			))}
		</svg>
	)
}

const quotes = [
	{ sym: "XAUUSD", mark: "g", bid: ["3240.61", "gray"], ask: ["3240.92", "gray"], day: ["1.24%", "blue"], active: true },
	{ sym: "XAGUSD", mark: "r", bid: ["32.515", "gray"], ask: ["32.548", "blue"], day: ["0.86%", "blue"] },
	{ sym: "EURUSD", mark: "b", bid: ["1.12038", "red"], ask: ["1.12050", "red"], day: ["-0.45%", "red"] },
	{ sym: "GBPUSD", mark: "g", bid: ["1.32971", "red"], ask: ["1.32987", "red"], day: ["-0.33%", "red"] },
	{ sym: "USDJPY", mark: "g", bid: ["155.430", "red"], ask: ["155.444", "gray"], day: ["0.42%", "blue"] },
	{ sym: "US30", mark: "g", bid: ["42185.5", "red"], ask: ["42190.5", "gray"], day: ["0.23%", "blue"] },
	{ sym: "NAS100", mark: "g", bid: ["21212.4", "red"], ask: ["21214.4", "red"], day: ["-0.12%", "red"] },
	{ sym: "USOIL", mark: "g", bid: ["78.195", "red"], ask: ["78.235", "red"], day: ["0.61%", "blue"] },
	{ sym: "BTCUSD", mark: "g", bid: ["104718.95", "blue"], ask: ["104856.89", "blue"], day: ["1.15%", "blue"] },
	{ sym: "NDX", mark: "g", bid: ["21207.0", "blue"], ask: ["21209.3", "blue"], day: ["-0.14%", "red"] },
]

const navigatorItems = [
	["Accounts", <AccountsIcon key="a" />],
	["Indicators", <IndicatorsIcon key="i" />],
	["Expert Advisors", <AdvisorsIcon key="e" />],
	["Scripts", <ScriptsIcon key="s" />],
	["Services", <ServicesIcon key="v" />],
	["Market", <LockIcon key="m" w={11} h={15} />],
	["VPS", <VpsIcon key="p" />],
]

const robotRows = [
	["Status:", "RUNNING", "#6fcf12"],
	["Level:", "0 / 8"],
	["Direction:", "-"],
	["Average Price:", "-"],
	["Target Price:", "-"],
	["ATR (points):", "612.8", "#e2930c"],
]

const tradeColumns = [
	["Symbol", 191, true], ["Ticket", 95, true], ["Time", 185], ["Type", 119], ["Volume", 142], ["Price", 132], ["S / L", 136],
	["T / P", 137], ["Price", 138], ["Profit", 137], ["Magic", 123], ["Comment", 160],
]
const toolboxTabs = [
	["Exposure"], ["History"], ["News", "99"], ["Mailbox", "7"], ["Calendar"], ["Company"], ["Alerts"], ["Articles"], ["Code Base"], ["Experts"], ["Journal"],
]
const timeframes = [["M1", 33], ["M5", 34], ["M15", 36], ["M30", 36, true], ["H1", 31], ["H4", 34], ["D1", 34], ["W1", 31], ["MN", 34]]
const statusCells = [119, 93, 84, 79, 79, 83, 87]

export default function App() {
	return (
		<Screen>
			<GlobalStyle />
			<TitleBar>
				<ExnessLogo />
				<TitleText>52378596 - Exness-MT5Real7 - Hedge - Exness Technologies Ltd - [XAUUSD,M30]</TitleText>
				<WindowButtons $gap={38} $right={18}>
					<MinimizeGlyph w={11} />
					<RestoreGlyph s={11} />
					<CloseX size={11} color="#d0d0d0" stroke={1.2} />
				</WindowButtons>
			</TitleBar>
			<MenuBar>
				<TerminalLogo />
				<MenuItem $w={42} $ml={13}>File</MenuItem>
				<MenuItem $w={50}>View</MenuItem>
				<MenuItem $w={52.5}>Insert</MenuItem>
				<MenuItem $w={57.5}>Charts</MenuItem>
				<MenuItem $w={53}>Tools</MenuItem>
				<MenuItem $w={69}>Window</MenuItem>
				<MenuItem $w={40}>Help</MenuItem>
				<WindowButtons $gap={17} $right={6}>
					<MinimizeGlyph w={8} />
					<RestoreGlyph s={9} />
					<CloseX size={8} />
				</WindowButtons>
			</MenuBar>
			<Toolbar>
				<Tool $w={19} $ml={15}><ChartNewIcon /></Tool>
				<Tool $w={7} $ml={8.5}><Caret /></Tool>
				<Tool $w={17} $ml={11.5}><ProfileIcon /></Tool>
				<Tool $w={7} $ml={9}><Caret /></Tool>
				<Tool $w={16} $ml={15}><SheetIcon /></Tool>
				<ToolSep $ml={13} />
				<Tool $w={17} $ml={10}><WalletIcon /></Tool>
				<Tool $w={13} $ml={19}><LockIcon /></Tool>
				<Tool $w={18} $ml={17}><SignalsIcon /></Tool>
				<Tool $w={17} $ml={16}><HostingIcon /></Tool>
				<ToolSep $ml={10} />
				<Tool $w={18} $ml={5}><MqlIcon /></Tool>
				<ToolSep $ml={7} />
				<Tool $w={13} $ml={8}><AlgoIcon /></Tool>
				<Tool $w={74} $ml={7}>Algo Trading</Tool>
				<Tool $w={13} $ml={13}><OrderIcon /></Tool>
				<Tool $w={63} $ml={7}>New Order</Tool>
				<ToolSep $ml={7} />
				<Tool $w={15} $ml={12}><BarsChartIcon /></Tool>
				<Tool $w={16} $ml={16}><CandlesIcon /></Tool>
				<Tool $w={21} $ml={14}><LineIcon /></Tool>
				<ToolSep $ml={9} />
				<Tool $w={15} $ml={11}><ZoomIcon /></Tool>
				<Tool $w={15} $ml={17}><ZoomIcon /></Tool>
				<ToolSep $ml={13} />
				<Tool $w={18} $ml={10}><GreenBarsIcon /></Tool>
				<Tool $w={32} $ml={7.5} $on><GreenBarsIcon hi /></Tool>
				<ToolSep $ml={3} />
				<Tool $w={19} $ml={8}><AutoscaleIcon /></Tool>
				<ToolSep $ml={9} />
				<ToolSep $ml={6} $dotted />
				<Tool $w={31} $ml={4} $on><CursorIcon /></Tool>
				<Tool $w={19} $ml={8}><CalcIcon /></Tool>
				<Tool $w={7} $ml={8}><Caret /></Tool>
				<ToolSep $ml={8} />
				<Tool $w={29} $ml={6} $on><GridIcon /></Tool>
				<Tool $w={7} $ml={3}><Caret /></Tool>
				<Tool $w={30} $ml={4} $on><GearIcon /></Tool>
				<Tool $w={19} $ml={10}><ArrowsIcon /></Tool>
				<ToolSep $ml={10} />
				{timeframes.map(([label, w, on], i) => (
					<Timeframe key={label} $w={w} $ml={i === 0 ? 4 : 0} $on={on}>{label}</Timeframe>
				))}
				<ToolSep $ml={0} />
				<ToolbarEnd>
					<SearchIcon />
					<CoinWrap>
						<CoinIcon />
						<AlertDot>!</AlertDot>
					</CoinWrap>
					<Tool $w={14} $ml={18}><LyxIcon /></Tool>
					<Meter>
						<MeterFill style={{ width: "56%" }} />
					</Meter>
				</ToolbarEnd>
			</Toolbar>

			<Workspace>
				<LeftDock>
					<DockPanel $h={400}>
						<DockTitle $h={15}>
							Market Watch: 12:14:27
							<DockClose><CloseX size={7} /></DockClose>
						</DockTitle>
						<QuotesHead>
							<HeadCell $left>Symbol</HeadCell>
							<HeadCell>Bid</HeadCell>
							<HeadCell>Ask</HeadCell>
							<HeadCell>Daily...</HeadCell>
						</QuotesHead>
						{quotes.map((q) => (
							<QuoteRow key={q.sym} $active={q.active}>
								<SymbolCell>
									{q.mark === "b" ? <SpreadMark /> : <ChevronMark color={q.mark === "g" ? "#58b81f" : "#e2301f"} />}
									{q.sym}
								</SymbolCell>
								<QuoteCell $pad={6} $tone={q.bid[1]}>{q.bid[0]}</QuoteCell>
								<QuoteCell $pad={6} $tone={q.ask[1]}>{q.ask[0]}</QuoteCell>
								<QuoteCell $pad={7} $tone={q.day[1]}>{q.day[0]}</QuoteCell>
							</QuoteRow>
						))}
						<AddRow>
							<AddPlus>+</AddPlus>
							click to add...
							<AddCount>10 / 259</AddCount>
						</AddRow>
						<Spacer />
						<TabStrip $h={24}>
							<ActiveTab $w={70}>Symbols</ActiveTab>
							<Tab>Details</Tab>
							<Tab>Trading</Tab>
							<Tab $last>Ticks</Tab>
						</TabStrip>
					</DockPanel>
					<DockPanel $h={228} $mt={10}>
						<DockTitle $h={18}>
							Navigator
							<DockClose><CloseX size={7} /></DockClose>
						</DockTitle>
						<TreeList>
							<TreeRow $root>
								<TreeIcon><RootIcon /></TreeIcon>
								MetaTrader 5
							</TreeRow>
							{navigatorItems.map(([label, icon]) => (
								<TreeRow key={label}>
									<TreeToggle />
									<TreeIcon>{icon}</TreeIcon>
									{label}
								</TreeRow>
							))}
						</TreeList>
						<Spacer />
						<TabStrip $h={24}>
							<ActiveTab $w={74}>Common</ActiveTab>
							<Tab $last>Favorites</Tab>
						</TabStrip>
					</DockPanel>
				</LeftDock>
				<ChartColumn>
					<ChartFrame>
						<PriceChart />
						<ChartCaption>
							<FlagIcon tint="#e05a62" />
							<FlagSlot><FlagIcon tint="#d84a55" /></FlagSlot>
							<CaptionText>XAUUSD, M30:  Gold vs US Dollar</CaptionText>
						</ChartCaption>
						<RobotPanel>
							<RobotTitle>LADDERY<RobotAccent>X</RobotAccent></RobotTitle>
							<RobotRule $mt={7} />
							<RobotRows>
								{robotRows.map(([label, value, color]) => (
									<RobotRow key={label}>
										<span>{label}</span>
										<RobotValue $color={color}>{value}</RobotValue>
									</RobotRow>
								))}
							</RobotRows>
							<RobotRule $mt={7} />
							<RobotAlert>Volatility high — entries paused</RobotAlert>
							<RobotActions>
								<RobotButton $w={88} $bg="#3e6b1d">START</RobotButton>
								<RobotButton $w={88} $bg="#a8222a">STOP</RobotButton>
								<RobotButton $w={95} $bg="#b5780a">CLOSE ALL</RobotButton>
							</RobotActions>
						</RobotPanel>
					</ChartFrame>
					<ChartBand />
				</ChartColumn>
			</Workspace>

			<Toolbox>
				<ToolboxRail>
					<CloseX size={8} color="#e0e0e0" />
					<RailLabel>Toolbox</RailLabel>
				</ToolboxRail>
				<ToolboxBody>
					<TradeHead>
						{tradeColumns.map(([label, w, left], i) => (
							<TradeColumn key={i} $w={w} $left={left}>{label}</TradeColumn>
						))}
					</TradeHead>
					<BalanceRow>
						<BalanceMark />
						<BalanceText $mr={9}>Balance: 10 000.00 USD</BalanceText>
						<BalanceText $mr={9}>Equity: 10 000.00</BalanceText>
						<BalanceText $mr={9}>Free Margin: 10 000.00</BalanceText>
						<BalanceText $mr={0}>Margin: 0.00</BalanceText>
						<BalanceProfit>0.00</BalanceProfit>
					</BalanceRow>
					<TradeEmpty />
					<ToolboxTabs>
						<ToolboxActive $w={51}>Trade</ToolboxActive>
						{toolboxTabs.map(([label, badge], i) => (
							<ToolboxTab key={label} $last={i === toolboxTabs.length - 1}>
								{label}
								{badge && <TabBadge>{badge}</TabBadge>}
							</ToolboxTab>
						))}
					</ToolboxTabs>
				</ToolboxBody>
			</Toolbox>
			<StatusBar>
				<StatusCell $w={840} $pad={3}>For Help, press F1</StatusCell>
				<StatusCell $w={129} $pad={5}>Default</StatusCell>
				{statusCells.map((w, i) => (
					<StatusCell key={i} $w={w} />
				))}
				<StatusCell $w={124} $pad={7}>
					<SignalBars />
					63.25 ms
				</StatusCell>
			</StatusBar>
		</Screen>
	)
}
